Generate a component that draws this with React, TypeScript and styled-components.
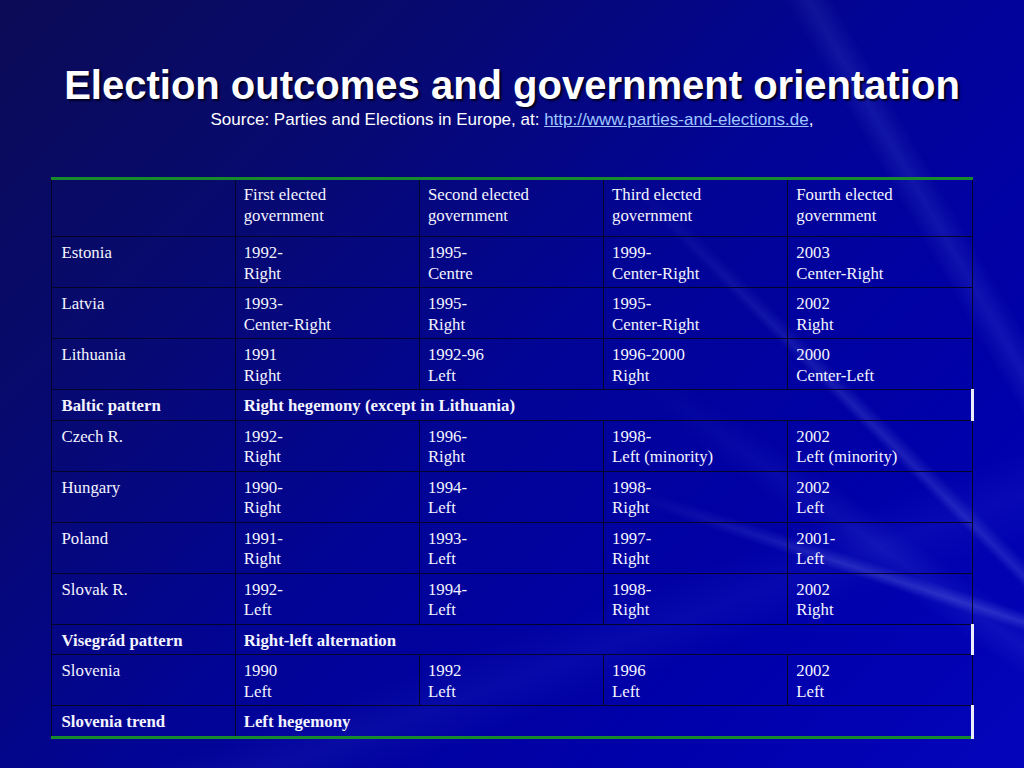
import React from "react";
import styled, { createGlobalStyle } from "styled-components";

const Global = createGlobalStyle`
  html, body { margin: 0; padding: 0; }
  body { width: 1024px; height: 768px; overflow: hidden; }
`;

const Slide = styled.div`
  position: relative;
  isolation: isolate;
  width: 1024px;
  height: 768px;
  overflow: hidden;
  box-sizing: border-box;
  padding-top: 61px;
  background:
    linear-gradient(160deg, transparent 72%, rgba(100,120,255,0.07) 76%, transparent 80%),
    linear-gradient(135deg, #0b0b56 0%, #080a6c 22%, #020495 50%, #0000a8 75%, #0404bc 100%);
  font-family: "Liberation Sans", Arial, sans-serif;
  color: #ffffff;

  &::before {
    content: "";
    position: absolute;
    top: 0;
    right: 0;
    width: 420px;
    height: 768px;
    z-index: -1;
    background:
      linear-gradient(18deg, transparent 30.2%, rgba(150,170,255,0.22) 31.2%, transparent 32.4%),
      linear-gradient(45deg, transparent 50.5%, rgba(150,170,255,0.18) 51.5%, transparent 53%),
      linear-gradient(60deg, transparent 72%, rgba(140,160,255,0.12) 75%, transparent 78%),
      linear-gradient(35deg, transparent 36%, rgba(120,140,255,0.10) 39%, transparent 42%);
    -webkit-mask-image: linear-gradient(to right, transparent 0%, #000 60%);
    mask-image: linear-gradient(to right, transparent 0%, #000 60%);
  }
`;

const Header = styled.header`
  display: flex;
  flex-direction: column;
  align-items: center;
`;

const Title = styled.h1`
  margin: 0;
  font-family: "Liberation Sans", Arial, sans-serif;
  font-weight: 700;
  font-size: 40px;
  line-height: 49px;
  color: #ffffff;
  text-shadow: 2px 2px 2px #000022;
`;

const Source = styled.p`
  margin: 0;
  font-size: 17px;
  line-height: 20px;
  color: #ffffff;
`;

const Link = styled.a`
  color: #9fc6ff;
  text-decoration: underline;
`;

const Table = styled.table`
  margin: 47px auto 0;
  width: 923px;
  border-collapse: collapse;
  table-layout: fixed;
  border-top: 3px solid #168a2c;
  border-bottom: 3px solid #168a2c;
  font-family: "Liberation Serif", "Times New Roman", serif;
  font-size: 16.8px;
  line-height: 20.5px;
  color: #f4f4ff;
`;

const Cell = styled.td<{ $bold?: boolean; $span?: boolean; $head?: boolean; $first?: boolean }>`
  border: 1.5px solid #03042a;
  padding: ${(p) => (p.$head ? "5px 8px 10px" : "6px 8px 3px")};
  ${(p) => (p.$first ? "padding-left: 10px;" : "")}
  vertical-align: top;
  font-weight: ${(p) => (p.$bold ? 700 : 400)};
  ${(p) => (p.$span ? "border-right: 3px solid #ececff;" : "")}
`;

const Line = styled.span`
  display: block;
`;

type Row = { label: string; cells?: [string, string][]; summary?: string };

const header = ["First elected", "Second elected", "Third elected", "Fourth elected"];

const rows: Row[] = [
  { label: "Estonia", cells: [["1992-", "Right"], ["1995-", "Centre"], ["1999-", "Center-Right"], ["2003", "Center-Right"]] },
  { label: "Latvia", cells: [["1993-", "Center-Right"], ["1995-", "Right"], ["1995-", "Center-Right"], ["2002", "Right"]] },
  { label: "Lithuania", cells: [["1991", "Right"], ["1992-96", "Left"], ["1996-2000", "Right"], ["2000", "Center-Left"]] },
  { label: "Baltic pattern", summary: "Right hegemony (except in Lithuania)" },
  { label: "Czech R.", cells: [["1992-", "Right"], ["1996-", "Right"], ["1998-", "Left (minority)"], ["2002", "Left (minority)"]] },
  { label: "Hungary", cells: [["1990-", "Right"], ["1994-", "Left"], ["1998-", "Right"], ["2002", "Left"]] },
  { label: "Poland", cells: [["1991-", "Right"], ["1993-", "Left"], ["1997-", "Right"], ["2001-", "Left"]] },
  { label: "Slovak R.", cells: [["1992-", "Left"], ["1994-", "Left"], ["1998-", "Right"], ["2002", "Right"]] },
  { label: "Visegrád pattern", summary: "Right-left alternation" },
  { label: "Slovenia", cells: [["1990", "Left"], ["1992", "Left"], ["1996", "Left"], ["2002", "Left"]] },
  { label: "Slovenia trend", summary: "Left hegemony" },
];

export default function App() {
  return (
    <>
      <Global />
      <Slide>
        <Header>
          <Title>Election outcomes and government orientation</Title>
          <Source>
            Source: Parties and Elections in Europe, at:{" "}
            <Link href="#">http://www.parties-and-elections.de</Link>,
          </Source>
        </Header>
        <Table>
          <tbody>
            <tr>
              <Cell $head $first />
              {header.map((h) => (
                <Cell $head key={h}>
                  <Line>{h}</Line>
                  <Line>government</Line>
                </Cell>
              ))}
            </tr>
            {rows.map((r) =>
              r.summary ? (
                <tr key={r.label}>
                  <Cell $bold $first>{r.label}</Cell>
                  <Cell $bold $span colSpan={4}>
                    {r.summary}
                  </Cell>
                </tr>
              ) : (
                <tr key={r.label}>
                  <Cell $first>{r.label}</Cell>
                  {r.cells!.map(([a, b], i) => (
                    <Cell key={i}>
                      <Line>{a}</Line>
                      <Line>{b}</Line>
                    </Cell>
                  ))}
                </tr>
              )
            )}
          </tbody>
        </Table>
      </Slide>
    </>
  );
}
